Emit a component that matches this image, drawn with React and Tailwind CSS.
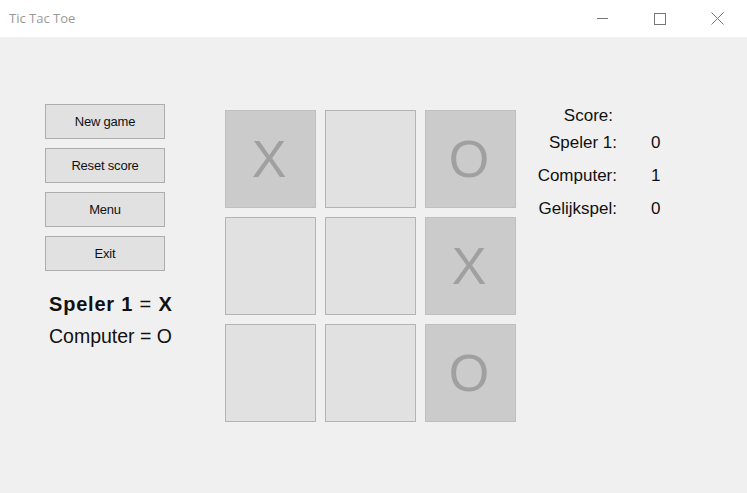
const board = ["X", "", "O", "", "", "X", "", "", "O"];

const buttons = ["New game", "Reset score", "Menu", "Exit"];

const scores = [
  ["Speler 1:", 0],
  ["Computer:", 1],
  ["Gelijkspel:", 0],
];

function TitleBar() {
  return (
    <div className="h-[37px] bg-white flex items-center justify-between">
      <span className="pl-[9px] text-[13px] text-[#999999] font-['Open_Sans',sans-serif]">
        Tic Tac Toe
      </span>
      <div className="flex h-full">
        <div className="w-[58px] h-full flex items-center justify-center">
          <span className="block w-[11px] h-px bg-[#777777]"></span>
        </div>
        <div className="w-[58px] h-full flex items-center justify-center">
          <span className="block w-[12px] h-[12px] border border-[#777777]"></span>
        </div>
        <div className="w-[58px] h-full flex items-center justify-center pr-[1px]">
          <svg width="13" height="13" viewBox="0 0 13 13">
            <path d="M0.5 0.5L12.5 12.5M12.5 0.5L0.5 12.5" stroke="#777777" strokeWidth="1" />
          </svg>
        </div>
      </div>
    </div>
  );
}

function Cell({ value }) {
  const filled = value !== "";
  return (
    <div
      className={
        filled
          ? "w-[91px] h-[98px] bg-[#cbcbcb] border border-[#bfbfbf] flex items-center justify-center"
          : "w-[91px] h-[98px] bg-[#e1e1e1] border border-[#b4b4b4] flex items-center justify-center"
      }
    >
      <span className="text-[52px] leading-none text-[#a0a0a0] pr-[3px]">{value}</span>
    </div>
  );
}

export default function App() {
  return (
    <div className="w-[747px] h-[493px] bg-[#f0f0f0] font-['Liberation_Sans',Arial,sans-serif] text-black overflow-hidden">
      <TitleBar />
      <div className="flex pl-[45px]">
        {/* knoppen + spelers */}
        <div className="w-[120px] pt-[67px]">
          <div className="flex flex-col gap-[9px]">
            {buttons.map((b) => (
              <div
                key={b}
                className="h-[35px] bg-[#e1e1e1] border border-[#adadad] flex items-center justify-center text-[13px] text-[#111111] tracking-[-0.2px]"
              >
                {b}
              </div>
            ))}
          </div>
          <div className="mt-[17px] pl-[4px] text-[20px] leading-[32px] whitespace-nowrap text-[#111111]">
            <div className="font-bold tracking-[0.8px]">
              Speler 1 <span className="font-normal">=</span> X
            </div>
            <div className="text-[19.5px]">Computer = O</div>
          </div>
        </div>

        {/* speelbord */}
        <div className="ml-[60px] pt-[73px]">
          <div className="grid grid-cols-3 gap-x-[9px] gap-y-[9px]">
            {board.map((v, i) => (
              <Cell key={i} value={v} />
            ))}
          </div>
        </div>

        {/* score */}
        <div className="ml-[20px] pt-[69px] text-[17px] leading-[20px] text-[#111111]">
          <div className="w-[81px] text-right pr-[4px] h-[27px]">Score:</div>
          <div className="flex flex-col gap-[13px]">
            {scores.map(([label, n]) => (
              <div key={label} className="flex h-[20px]">
                <span className="w-[81px] text-right">{label}</span>
                <span className="ml-[34px]">{n}</span>
              </div>
            ))}
          </div>
        </div>
      </div>
    </div>
  );
}
